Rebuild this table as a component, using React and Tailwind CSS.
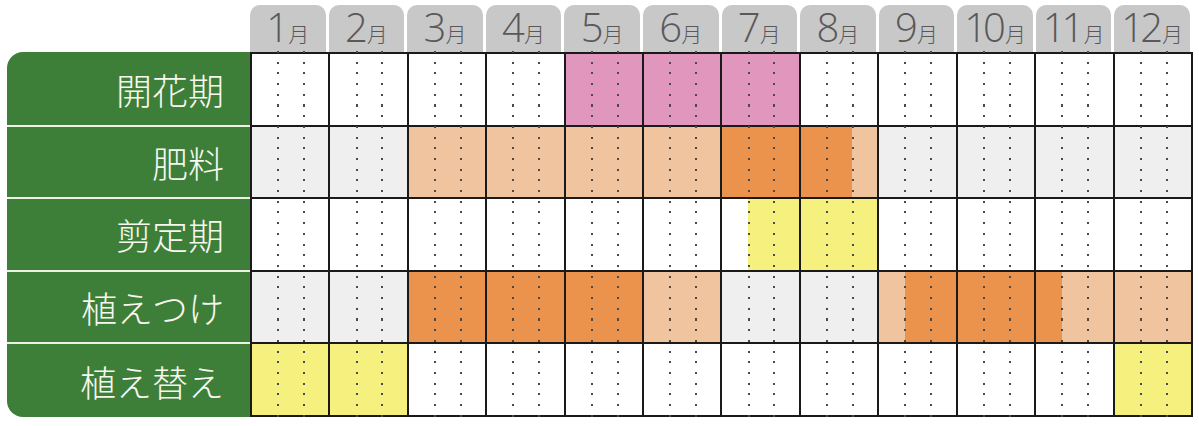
import React from 'react';

const months = ['1', '2', '3', '4', '5', '6', '7', '8', '9', '10', '11', '12'];

const fills = {
  p: 'bg-[#e096bd]',
  l: 'bg-[#f0c49e]',
  d: 'bg-[#eb924d]',
  y: 'bg-[#f6f07e]',
  '.': '',
};

// each month is split in thirds
const rows = [
  { label: '開花期', base: 'bg-white', plan: '... ... ... ... ppp ppp ppp ... ... ... ... ...' },
  { label: '肥料', base: 'bg-[#efefef]', plan: '... ... lll lll lll lll ddd ddl ... ... ... ...' },
  { label: '剪定期', base: 'bg-white', plan: '... ... ... ... ... ... .yy yyy ... ... ... ...' },
  { label: '植えつけ', base: 'bg-[#efefef]', plan: '... ... ddd ddd ddd lll ... ... ldd ddd dll lll' },
  { label: '植え替え', base: 'bg-white', plan: 'yyy yyy ... ... ... ... ... ... ... ... ... yyy' },
];

const dotLine =
  'absolute top-0 bottom-0 w-[2px] bg-[image:repeating-linear-gradient(to_bottom,#4a4a4a_0px,#4a4a4a_2px,transparent_2px,transparent_10.7px)]';

const App = () => {
  return (
    <div className="w-[1199px] h-[426px] bg-white overflow-hidden font-['Noto_Sans_CJK_JP',sans-serif]">
      {/* month tabs */}
      <div className="pl-[250px] pt-[5px]">
        <div className="grid grid-cols-12 w-[943px] h-[47px] text-[#595959]">
          {months.map((m) => (
            <div key={m} className="mr-[3px] rounded-t-[10px] bg-[#c8c8c9] flex items-end justify-center pb-[5px]">
              <div className="flex items-baseline">
                <span className="font-['Open_Sans',sans-serif] text-[40px] leading-none font-light tracking-[-4px]">{m}</span>
                <span className="text-[21px] leading-none font-light ml-[3px]">月</span>
              </div>
            </div>
          ))}
        </div>
      </div>

      <div className="flex pl-[7px]">
        {/* labels */}
        <div className="w-[243px] bg-[#3d7f39] rounded-l-[16px] pt-[2px] flex flex-col">
          {rows.map((r, i) => (
            <div
              key={r.label}
              className={`h-[72.6px] flex items-center justify-end pr-[26px] text-[36px] font-light text-[#f7f7f0] ${i < rows.length - 1 ? 'border-b-2 border-[#eef0e6]' : ''}`}
            >
              {r.label}
            </div>
          ))}
        </div>

        {/* chart */}
        <div className="relative w-[943px] border-l-2 border-t-2 border-[#1a1a1a]">
          {rows.map((r) => (
            <div key={r.label} className="grid grid-cols-12 h-[72.6px]">
              {r.plan.split(' ').map((seg, j) => (
                <div key={j} className={`flex border-r-2 border-b-2 border-[#1a1a1a] ${r.base}`}>
                  {seg.split('').map((c, k) => (
                    <div key={k} className={`flex-1 ${fills[c]}`} />
                  ))}
                </div>
              ))}
            </div>
          ))}

          {/* dotted guides */}
          <div className="absolute left-0 right-0 -top-[3px] -bottom-[5px] grid grid-cols-12 pointer-events-none">
            {months.map((m) => (
              <div key={m} className="relative">
                <div className={`${dotLine} left-[32%]`} />
                <div className={`${dotLine} left-[65%]`} />
              </div>
            ))}
          </div>
        </div>
      </div>
    </div>
  );
};

export default App;
